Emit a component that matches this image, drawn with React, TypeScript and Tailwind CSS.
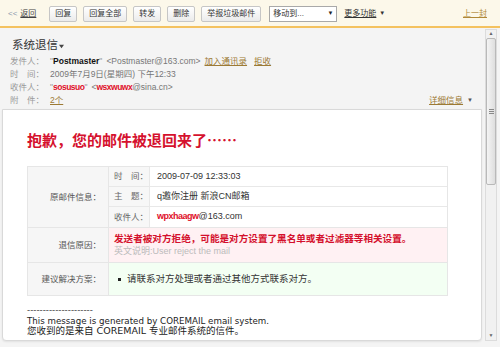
import React from "react";

const base = "font-['Liberation_Sans','Noto_Sans_CJK_SC',sans-serif]";

function ToolButton({ children }: { children: React.ReactNode }) {
  return (
    <span className="flex h-[16px] items-center rounded-[2px] border border-[#c6c6c6] bg-gradient-to-b from-white to-[#ebebeb] px-[5px] text-[8px] text-[#333]">
      {children}
    </span>
  );
}

function Toolbar() {
  return (
    <div className="flex h-[28px] shrink-0 items-center border-b-2 border-[#f4c25f] bg-[#fcf8ea] pl-[8px] pr-[13px] pt-[1px] text-[8px]">
      <span className="text-[#8a97ad]">&lt;&lt;</span>
      <span className="ml-[3px] text-[#444] underline">返回</span>
      <div className="ml-[13px] flex gap-[6px]">
        <ToolButton>回复</ToolButton>
        <ToolButton>回复全部</ToolButton>
        <ToolButton>转发</ToolButton>
        <ToolButton>删除</ToolButton>
        <ToolButton>举报垃圾邮件</ToolButton>
      </div>
      <div className="ml-[8px] flex h-[16px] w-[68px] items-center justify-between border border-[#a9a9a9] bg-white pl-[3px] pr-[3px] text-[#333]">
        <span>移动到...</span>
        <span className="text-[6px] text-[#222]">▼</span>
      </div>
      <span className="ml-[7px] text-[#333] underline">更多功能</span>
      <span className="ml-[3px] text-[6px] text-[#333]">▼</span>
      <span className="ml-auto text-[#b08838] underline">上一封</span>
    </div>
  );
}

function Label({ children }: { children: React.ReactNode }) {
  return <span className="w-[40px] shrink-0 text-[#9a9a9a]">{children}</span>;
}

function Header() {
  return (
    <div className="h-[81px] shrink-0 pl-[10px] pr-[10px] pt-[8px] text-[8.5px]">
      <div className="flex h-[19px] items-center pl-[2px] text-[11.5px] text-[#333]">
        系统退信
        <svg width="5" height="5" viewBox="0 0 6 6" className="ml-[1px] mt-[1px]">
          <path d="M0 1h6L3 5z" fill="#444" />
        </svg>
      </div>
      <div className="flex h-[13px] items-center">
        <Label>发件人：</Label>
        <span className="text-[#999]">"</span>
        <span className="font-bold text-[#111]">Postmaster</span>
        <span className="text-[#999]">"</span>
        <span className="ml-[4px] text-[#777]">&lt;Postmaster@163.com&gt;</span>
        <span className="ml-[4px] text-[#9c7a35] underline">加入通讯录</span>
        <span className="ml-[7px] text-[#9c7a35] underline">拒收</span>
      </div>
      <div className="flex h-[13px] items-center">
        <Label>时　间：</Label>
        <span className="text-[#777]">2009年7月9日(星期四) 下午12:33</span>
      </div>
      <div className="flex h-[13px] items-center">
        <Label>收件人：</Label>
        <span className="text-[#999]">"</span>
        <span className="font-bold tracking-[-0.5px] text-[#e0102a]">sosusuo</span>
        <span className="text-[#999]">"</span>
        <span className="ml-[4px] text-[#777]">&lt;</span>
        <span className="font-bold tracking-[-0.5px] text-[#e0102a]">wsxwuwx</span>
        <span className="text-[#777]">@sina.cn&gt;</span>
      </div>
      <div className="flex h-[13px] items-center">
        <Label>附　件：</Label>
        <span className="text-[#9c7a35] underline">2个</span>
        <span className="ml-auto mr-[1px] text-[#9c7a35] underline">详细信息</span>
        <span className="ml-[3px] mr-[2px] text-[6px] text-[#555]">▼</span>
      </div>
    </div>
  );
}

function SubRow({ label, children, last }: { label: string; children: React.ReactNode; last?: boolean }) {
  return (
    <div className={`flex h-[20px] ${last ? "" : "border-b border-[#e8e8e8]"}`}>
      <div className="flex w-[40px] shrink-0 items-center bg-[#f7f7f7] pl-[5px] text-[8.5px] text-[#666]">{label}</div>
      <div className="flex flex-1 items-center border-l border-[#e8e8e8] bg-white pl-[7px] text-[9px] text-[#333]">
        {children}
      </div>
    </div>
  );
}

function BounceTable() {
  return (
    <div className="mt-[16px] w-[421px] border border-[#e6e6e6] text-[8.5px]">
      <div className="flex border-b border-[#e6e6e6]">
        <div className="flex w-[80px] shrink-0 items-center justify-end bg-[#f6f6f6] pr-[7px] text-[#555]">原邮件信息：</div>
        <div className="flex-1 border-l border-[#e6e6e6]">
          <SubRow label="时　间：">2009-07-09 12:33:03</SubRow>
          <SubRow label="主　题：">q邀你注册 新浪CN邮箱</SubRow>
          <SubRow label="收件人：" last>
            <span className="font-bold tracking-[-0.5px] text-[#e0102a]">wpxhaagw</span>
            <span>@163.com</span>
          </SubRow>
        </div>
      </div>
      <div className="flex h-[35px] border-b border-[#e6e6e6]">
        <div className="flex w-[80px] shrink-0 items-center justify-end bg-[#f6f6f6] pr-[7px] text-[#555]">退信原因：</div>
        <div className="flex flex-1 flex-col justify-center border-l border-[#e6e6e6] bg-[#fff1f3] pl-[5px] leading-[13px]">
          <span className="text-[9.6px] font-bold text-[#d4102c]">发送者被对方拒绝，可能是对方设置了黑名单或者过滤器等相关设置。</span>
          <span className="text-[9px] text-[#bbb]">英文说明:User reject the mail</span>
        </div>
      </div>
      <div className="flex h-[32px]">
        <div className="flex w-[80px] shrink-0 items-center justify-end bg-[#f6f6f6] pr-[7px] text-[#555]">建议解决方案：</div>
        <div className="flex flex-1 items-center border-l border-[#e6e6e6] bg-[#f3fff3] pl-[9px] text-[9.5px] text-[#333]">
          <span className="mr-[6px] h-[3px] w-[3px] shrink-0 bg-[#222]" />
          请联系对方处理或者通过其他方式联系对方。
        </div>
      </div>
    </div>
  );
}

function Card() {
  return (
    <div className="mb-[6px] ml-[2px] mr-[3px] flex-1 rounded-b-[4px] border border-[#d9d9d9] bg-white pl-[24px] pt-[20px] shadow-[0_1px_2px_rgba(0,0,0,0.08)]">
      <div className="font-['Noto_Sans_CJK_SC',sans-serif] text-[15px] font-bold leading-[20px] text-[#d5112e]">
        抱歉，您的邮件被退回来了……
      </div>
      <BounceTable />
      <div className="mt-[10px] font-['DejaVu_Sans','Noto_Sans_CJK_SC',sans-serif] text-[8.7px] leading-[9.5px] text-[#222]">
        <div className="text-[#444]">---------------------</div>
        <div className="mt-[1px]">This message is generated by COREMAIL email system.</div>
        <div className="text-[9.5px]">您收到的是来自 COREMAIL 专业邮件系统的信件。</div>
      </div>
    </div>
  );
}

function Scrollbar() {
  return (
    <div className="mb-[6px] mt-[1px] flex w-[12px] shrink-0 flex-col border border-[#dcdcdc] bg-[#f1f1f1]">
      <div className="flex h-[8px] items-center justify-center text-[5px] text-[#666]">▲</div>
      <div className="flex h-[147px] items-center justify-center rounded-[2px] border border-[#b9b9b9] bg-gradient-to-r from-[#f4f4f4] to-[#dedede]">
        <div className="flex flex-col gap-[1px]">
          <div className="h-px w-[5px] bg-[#888]" />
          <div className="h-px w-[5px] bg-[#888]" />
          <div className="h-px w-[5px] bg-[#888]" />
        </div>
      </div>
      <div className="flex-1" />
      <div className="flex h-[8px] items-center justify-center text-[5px] text-[#666]">▼</div>
    </div>
  );
}

export default function App() {
  return (
    <div className={`flex h-[347px] w-[500px] flex-col overflow-hidden bg-[#f4f4f4] ${base}`}>
      <Toolbar />
      <div className="flex min-h-0 flex-1 pr-[3px]">
        <div className="flex min-w-0 flex-1 flex-col">
          <Header />
          <Card />
        </div>
        <Scrollbar />
      </div>
    </div>
  );
}
